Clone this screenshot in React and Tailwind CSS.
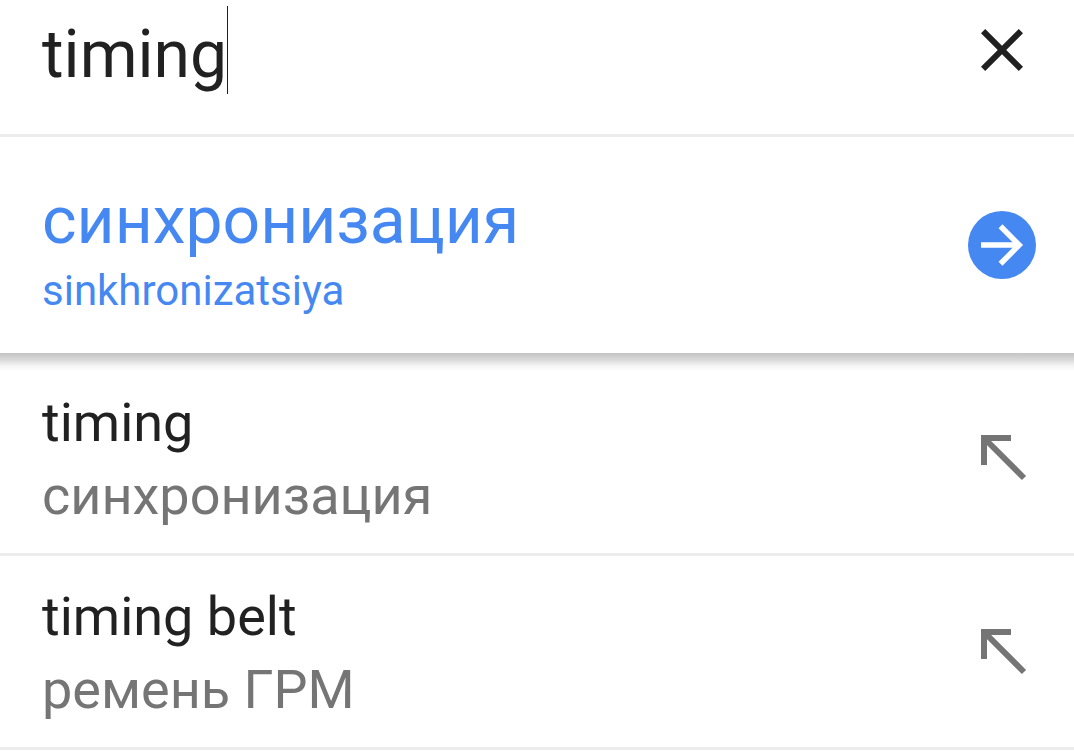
import React, { useState } from 'react';

const suggestions = [
  { id: 1, source: 'timing', target: 'синхронизация' },
  { id: 2, source: 'timing belt', target: 'ремень ГРМ' },
];

const App = () => {
  const [query, setQuery] = useState('timing');

  return (
    <div className="min-h-screen bg-white font-[Roboto,sans-serif] text-[#212121]">
      {/* Search field */}
      <div className="flex items-start justify-between border-b-3 border-[#ececec] pt-[6px] pb-10 pl-[42px] pr-9">
        <div className="flex min-w-0 flex-1">
          <input
            type="text"
            aria-label="Text to translate"
            value={query}
            onChange={(e) => setQuery(e.target.value)}
            className="field-sizing-content h-[88px] max-w-full border-r border-[#212121] bg-transparent pt-2 text-[66px] outline-none"
          />
        </div>
        <button aria-label="Clear text" onClick={() => setQuery('')} className="mt-2">
          <svg viewBox="0 0 24 24" className="size-[72px]" fill="#212121">
            <path d="M19 6.41L17.59 5 12 10.59 6.41 5 5 6.41 10.59 12 5 17.59 6.41 19 12 13.41 17.59 19 19 17.59 13.41 12z" />
          </svg>
        </button>
      </div>

      {/* Instant translation */}
      <div className="flex items-center justify-between py-[34px] pl-[42px] pr-[38px] text-[#4688f1]">
        <div className="pt-2">
          <p className="text-[66px] leading-[84px]">синхронизация</p>
          <p className="text-[42px] leading-[56px]">sinkhronizatsiya</p>
        </div>
        <button aria-label="Open translation" className="rounded-full bg-[#4688f1]">
          <svg viewBox="0 0 68 68" className="size-[68px]" fill="none" stroke="#fff" strokeWidth="5.5">
            <path d="M13 34H51M32.5 15.2L51.2 34 32.5 52.8" />
          </svg>
        </button>
      </div>

      {/* Suggestions, under the shadow of the card above */}
      <ul className="bg-[linear-gradient(to_bottom,#c3c3c3,#dadada_7px,#f5f5f5_13px,#fff_18px)] pt-[9px]">
        {suggestions.map((item) => (
          <Suggestion key={item.id} item={item} onSelect={setQuery} />
        ))}
      </ul>
    </div>
  );
};

const Suggestion = ({ item, onSelect }) => (
  <li className="flex items-center justify-between border-b-3 border-[#ececec] pt-6 pb-[21px] pl-[42px] pr-[46px]">
    <div className="text-[54px] leading-[73px]">
      <p>{item.source}</p>
      <p className="text-[#757575]">{item.target}</p>
    </div>
    <button aria-label={`Use ${item.source}`} onClick={() => onSelect(item.source)}>
      <svg viewBox="0 0 48 48" className="size-12" fill="none" stroke="#757575" strokeWidth="6">
        <path d="M4 30V3H31M4 3L44 43" />
      </svg>
    </button>
  </li>
);

export default App;
